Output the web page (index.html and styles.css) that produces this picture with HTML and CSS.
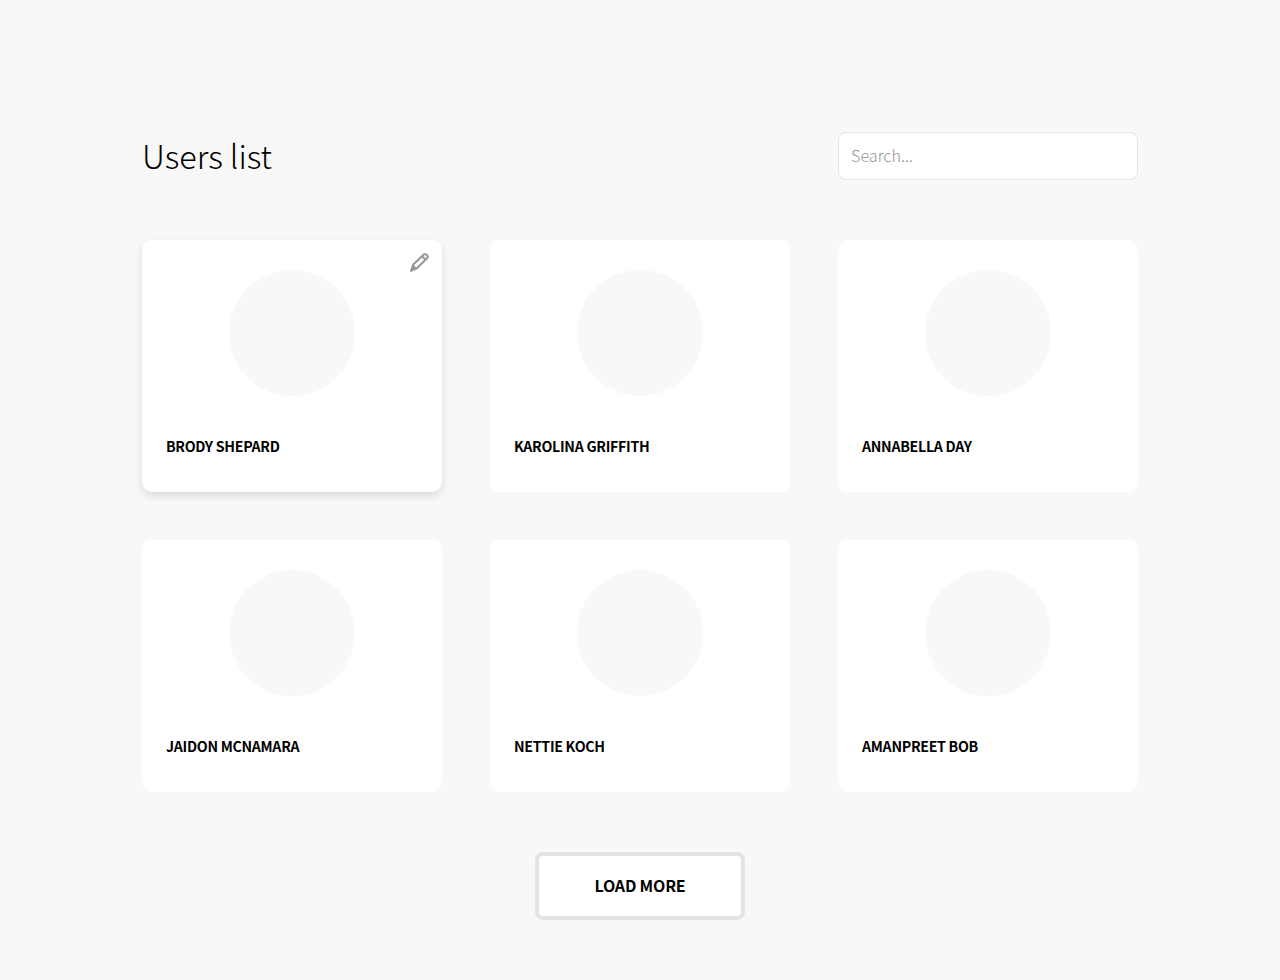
FILE: index.html
```html
<!DOCTYPE html>
<html lang="en">
<head>
<meta charset="utf-8">
<title>Users list</title>
<link rel="stylesheet" href="styles.css">
</head>
<body>
<main class="page">
  <header class="header">
    <h1 class="title">Users list</h1>
    <input class="search" type="text" placeholder="Search...">
  </header>
  <section class="grid">
    <article class="card card-active">
      <svg class="edit" viewBox="-0.8 0 20 20"><path d="M1.2 18.8 L3.5 12.4 L13.9 2.6 Q15.2 1.4 16.6 2.7 L17.4 3.5 Q18.6 4.8 17.4 6.1 L7.4 16 Z M12.3 4.2 L15.8 7.7"/><path class="edit-tip" d="M1 19 L3.3 12.4 L7.4 16.2 Z"/></svg>
      <div class="avatar"></div>
      <h2 class="name">BRODY SHEPARD</h2>
    </article>
    <article class="card"><div class="avatar"></div><h2 class="name">KAROLINA GRIFFITH</h2></article>
    <article class="card"><div class="avatar"></div><h2 class="name">ANNABELLA DAY</h2></article>
    <article class="card"><div class="avatar"></div><h2 class="name">JAIDON MCNAMARA</h2></article>
    <article class="card"><div class="avatar"></div><h2 class="name">NETTIE KOCH</h2></article>
    <article class="card"><div class="avatar"></div><h2 class="name">AMANPREET BOB</h2></article>
  </section>
  <button class="more">LOAD MORE</button>
</main>
</body>
</html>
```
FILE: styles.css
```css
* { box-sizing: border-box; }
body {
  margin: 0;
  background: #f8f8f8;
  color: #000;
  font-family: "Noto Sans CJK JP", "Noto Sans", sans-serif;
}
.page {
  width: 996px;
  margin: 0 auto;
  padding-top: 132px;
  display: flex;
  flex-direction: column;
  align-items: center;
}
.header {
  width: 100%;
  height: 48px;
  display: flex;
  align-items: center;
  justify-content: space-between;
}
.title { margin: 0; padding-bottom: 2px; font-size: 32.4px; font-weight: 300; line-height: 46px; letter-spacing: -0.08px; }
.search {
  width: 300px;
  height: 48px;
  padding: 0 12px 2px;
  border: 1px solid #e4e4e4;
  border-radius: 8px;
  background: #fff;
  font: 300 16.2px "Noto Sans CJK JP", sans-serif;
}
.search::placeholder { color: #949494; }
.grid {
  margin-top: 60px;
  display: grid;
  grid-template-columns: repeat(3, 300px);
  gap: 48px;
}
.card {
  position: relative;
  height: 252px;
  padding: 30px 24px;
  border-radius: 10px;
  background: #fff;
}
.card-active { box-shadow: 0 4px 9px rgba(0, 0, 0, 0.12); }
.edit {
  position: absolute;
  top: 12px;
  right: 13px;
  width: 20px;
  height: 20px;
  overflow: visible;
  fill: none;
  stroke: #999;
  stroke-width: 2.1;
  stroke-linejoin: round;
}
.edit-tip { fill: #999; stroke: none; }
.avatar {
  width: 126px;
  height: 126px;
  margin: 0 auto;
  border-radius: 50%;
  background: #f8f8f8;
}
.name { margin: 38px 0 0; font-size: 14.2px; font-weight: 700; line-height: 24px; letter-spacing: -0.3px; }
.more {
  width: 210px;
  height: 68px;
  margin-top: 60px;
  padding: 0 0 2px;
  border: 4px solid #e4e4e4;
  border-radius: 8px;
  background: #fff;
  color: #000;
  font: 700 16px "Noto Sans CJK JP", sans-serif;
  letter-spacing: -0.2px;
}
```
